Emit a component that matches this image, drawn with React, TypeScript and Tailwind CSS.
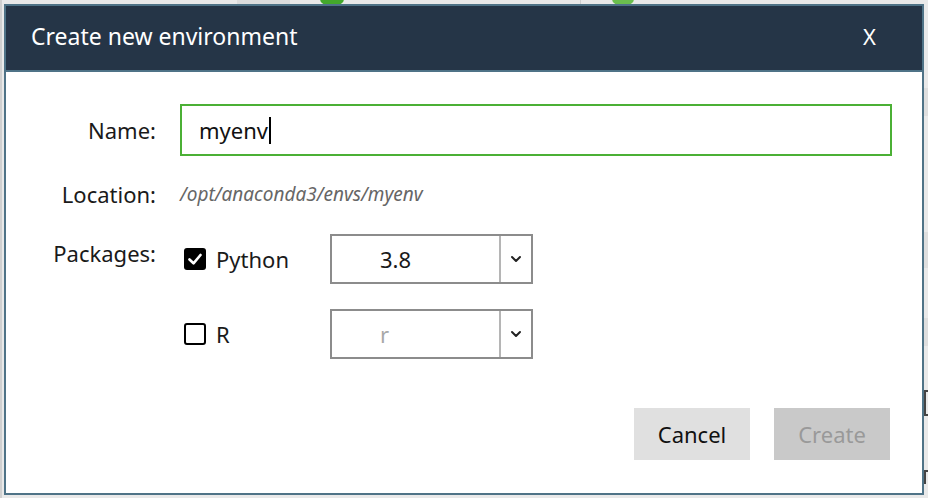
import React from "react";

const font = { fontFamily: "'Noto Sans', 'Open Sans', sans-serif" };

const Chevron = () => (
  <svg width="12" height="8" viewBox="0 0 12 8" fill="none">
    <path d="M2 2l4 4 4-4" stroke="#222" strokeWidth="2" strokeLinecap="round" strokeLinejoin="round" />
  </svg>
);

const Checkbox = ({ checked }: { checked?: boolean }) =>
  checked ? (
    <div className="w-[22px] h-[22px] rounded-[3px] bg-black flex items-center justify-center">
      <svg width="16" height="14" viewBox="0 0 16 14" fill="none">
        <path d="M2.5 7.5l4 3.8L13.5 3" stroke="#fff" strokeWidth="2.6" strokeLinecap="round" strokeLinejoin="round" />
      </svg>
    </div>
  ) : (
    <div className="w-[22px] h-[22px] rounded-[3px] border-2 border-black bg-white" />
  );

const Select = ({ value, muted }: { value: string; muted?: boolean }) => (
  <div className="w-[203px] h-[50px] border-2 border-[#8c8c8c] flex">
    <div className={`flex-1 flex items-center pl-[48px] text-[22px] ${muted ? "text-[#a8a8a8]" : "text-[#1a1a1a]"}`}>
      {value}
    </div>
    <div className="w-[32px] border-l-2 border-[#b5b5b5] flex items-center justify-center">
      <Chevron />
    </div>
  </div>
);

const PackageRow = ({ name, checked, version, muted }: { name: string; checked?: boolean; version: string; muted?: boolean }) => (
  <div className="flex items-center">
    <div className="w-[150px] flex items-center gap-[10px] pl-1">
      <Checkbox checked={checked} />
      <span className="text-[22px] text-[#1a1a1a]">{name}</span>
    </div>
    <Select value={version} muted={muted} />
  </div>
);

export default function App() {
  return (
    <div className="relative w-[928px] h-[498px] overflow-hidden bg-[#e9e9e9]" style={font}>
      {/* page behind the dialog */}
      <div className="absolute left-[237px] top-0 w-[53px] h-[6px] bg-[#dcdcdc]" />
      <div className="absolute left-[320px] -top-[8px] w-[24px] h-[13px] rounded-full bg-[#43a82b]" />
      <div className="absolute left-[612px] -top-[8px] w-[22px] h-[13px] rounded-full bg-[#6bbf4e]" />
      <div className="absolute left-[580px] top-0 w-px h-[6px] bg-[#cfcfcf]" />
      <div className="absolute left-[924px] top-[88px] w-[4px] h-[28px] bg-[#dedede]" />
      <div className="absolute left-[924px] top-[232px] w-[4px] h-[36px] bg-[#dedede]" />
      <div className="absolute left-[924px] top-[318px] w-[4px] h-[28px] bg-[#dedede]" />
      <div className="absolute left-[924px] top-[390px] w-[4px] h-[26px] border-l-2 border-y-2 border-[#444]" />
      <div className="absolute left-[924px] top-[470px] w-[4px] h-[14px] border-l-2 border-t-2 border-[#444]" />
      <div className="absolute left-0 top-0 w-[2px] h-full bg-[#d0d0d0]" />

      {/* modal */}
      <div className="absolute left-[4px] top-[4px] w-[920px] h-[491px] border-2 border-[#4f7387] bg-white flex flex-col">
        <div className="h-[64px] bg-[#253547] flex items-center justify-between pl-[25px] pr-[46px] pb-[3px] text-white">
          <span className="text-[23px]">Create new environment</span>
          <span className="text-[22px]">X</span>
        </div>
        <div className="h-[2px] bg-[#4f7387]" />

        <div className="flex flex-col pt-[32px] pr-[30px]">
          <div className="flex items-center h-[52px]">
            <div className="w-[150px] text-right text-[22px] text-[#1a1a1a]">Name:</div>
            <div className="ml-[24px] flex-1 h-[52px] border-2 border-[#4bb035] flex items-center pl-[17px] text-[22px] text-[#111]">
              myenv
              <span className="ml-px w-[2px] h-[27px] bg-black" />
            </div>
          </div>

          <div className="flex items-center mt-[23px] h-[30px]">
            <div className="w-[150px] text-right text-[22px] text-[#1a1a1a]">Location:</div>
            <div className="ml-[24px] text-[19px] italic text-[#666]">/opt/anaconda3/envs/myenv</div>
          </div>

          <div className="flex mt-[25px]">
            <div className="w-[150px] text-right text-[22px] text-[#1a1a1a] pt-[3px]">Packages:</div>
            <div className="ml-[24px] flex flex-col gap-[25px]">
              <PackageRow name="Python" checked version="3.8" />
              <PackageRow name="R" version="r" muted />
            </div>
          </div>

          <div className="flex justify-end gap-[24px] mt-[49px] pr-[2px]">
            <button className="w-[116px] h-[52px] bg-[#e0e0e0] text-[22px] text-[#111]">Cancel</button>
            <button className="w-[116px] h-[52px] bg-[#c9c9c9] text-[22px] text-[#999]">Create</button>
          </div>
        </div>
      </div>
    </div>
  );
}
